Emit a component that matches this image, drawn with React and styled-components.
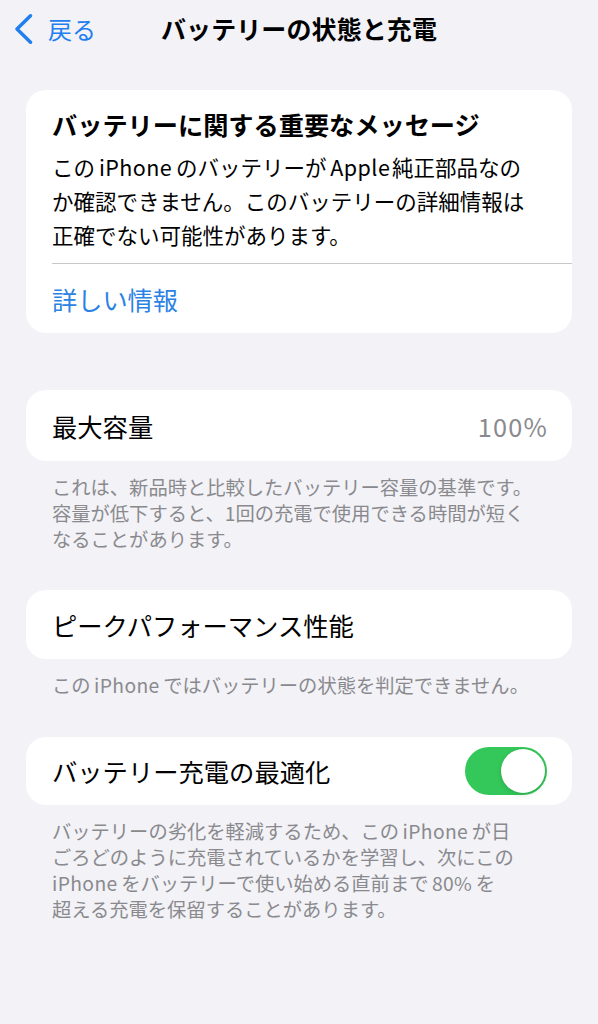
import React from "react";
import styled, { createGlobalStyle } from "styled-components";

const Global = createGlobalStyle`
  html, body {
    margin: 0;
    padding: 0;
    background: #f2f2f7;
  }
  body {
    font-family: "Noto Sans CJK JP", "Noto Sans", sans-serif;
    color: #000;
    -webkit-font-smoothing: antialiased;
  }
`;

const Page = styled.div`
  width: 598px;
  min-height: 1024px;
  background: #f2f2f7;
`;

const Nav = styled.header`
  display: grid;
  grid-template-columns: 1fr auto 1fr;
  align-items: center;
  height: 56px;
`;

const Back = styled.div`
  display: flex;
  align-items: center;
  gap: 14px;
  padding-left: 14px;
  color: #1f7ff0;
  font-size: 24px;
  line-height: 30px;
  padding-top: 1px;
`;

const Title = styled.h1`
  margin: 0;
  font-size: 25px;
  font-weight: 700;
  line-height: 30px;
  letter-spacing: 0.1px;
`;

const Content = styled.main`
  padding: 34px 26px 0;
  display: flex;
  flex-direction: column;
`;

const Card = styled.section`
  background: #fff;
  border-radius: 20px;
  margin-top: ${(p) => p.$gap || 0}px;
`;

const MessageBody = styled.div`
  padding: 17px 26px 11px;
`;

const Heading = styled.h2`
  margin: 0 0 9px;
  font-size: 25.2px;
  font-weight: 700;
  line-height: 34px;
`;

const BodyText = styled.p`
  margin: 0;
  font-size: 21.5px;
  line-height: 34px;
  white-space: nowrap;
`;

const Latin = styled.span`
  margin: 0 ${(p) => (p.$tight ? 0.08 : 0.18)}em 0 ${(p) => (p.$start ? 0 : 0.18)}em;
  letter-spacing: 0.02em;
`;

const Divider = styled.div`
  height: 1px;
  background: #c8c8cc;
  margin-left: 26px;
`;

const Link = styled.div`
  padding: 18px 26px 17px;
  font-size: 25.2px;
  line-height: 34px;
  color: #2a82e4;
`;

const Row = styled.div`
  display: flex;
  align-items: center;
  justify-content: space-between;
  height: ${(p) => p.$h || 70}px;
  padding: 0 26px;
`;

const Label = styled.span`
  font-size: 25.3px;
  line-height: 34px;
`;

const Value = styled.span`
  font-size: 25.3px;
  line-height: 34px;
  color: #8a8a8e;
  letter-spacing: 1.2px;
  margin-right: -2px;
`;

const Footer = styled.p`
  margin: 13px 0 0;
  padding: 0 26px;
  font-size: 19.3px;
  line-height: 26px;
  color: #8a8a8e;
  white-space: nowrap;
`;

const Track = styled.div`
  position: relative;
  width: 82px;
  height: 48px;
  border-radius: 24px;
  background: ${(p) => (p.$on ? "#34c759" : "#e9e9eb")};
  margin-right: -1px;
`;

const Knob = styled.div`
  position: absolute;
  top: 2px;
  left: ${(p) => (p.$on ? 36 : 2)}px;
  width: 44px;
  height: 44px;
  border-radius: 50%;
  background: #fff;
  box-shadow: 0 0 0 0.5px rgba(0, 0, 0, 0.06), 0 2px 5px rgba(0, 0, 0, 0.12);
`;

const Toggle = ({ on }) => (
  <Track $on={on}>
    <Knob $on={on} />
  </Track>
);

const Chevron = () => (
  <svg width="20" height="30" viewBox="0 0 20 30" fill="none">
    <path
      d="M16.5 1.8 L3 15 L16.5 28.2"
      stroke="#1f7ff0"
      strokeWidth="3.4"
      strokeLinecap="round"
      strokeLinejoin="round"
    />
  </svg>
);

export default function App() {
  return (
    <Page>
      <Global />
      <Nav>
        <Back>
          <Chevron />
          <span>戻る</span>
        </Back>
        <Title>バッテリーの状態と充電</Title>
        <div />
      </Nav>
      <Content>
        <Card>
          <MessageBody>
            <Heading>バッテリーに関する重要なメッセージ</Heading>
            <BodyText>
              この<Latin>iPhone</Latin>のバッテリーが<Latin $tight>Apple</Latin>純正部品なの
              <br />
              か確認できません。このバッテリーの詳細情報は
              <br />
              正確でない可能性があります。
            </BodyText>
          </MessageBody>
          <Divider />
          <Link>詳しい情報</Link>
        </Card>

        <Card $gap={57}>
          <Row $h={71}>
            <Label>最大容量</Label>
            <Value>100%</Value>
          </Row>
        </Card>
        <Footer>
          これは、新品時と比較したバッテリー容量の基準です。
          <br />
          容量が低下すると、1回の充電で使用できる時間が短く
          <br />
          なることがあります。
        </Footer>

        <Card $gap={38}>
          <Row $h={69}>
            <Label>ピークパフォーマンス性能</Label>
          </Row>
        </Card>
        <Footer>
          この<Latin>iPhone</Latin>ではバッテリーの状態を判定できません。
        </Footer>

        <Card $gap={39}>
          <Row $h={68}>
            <Label>バッテリー充電の最適化</Label>
            <Toggle on />
          </Row>
        </Card>
        <Footer>
          バッテリーの劣化を軽減するため、この<Latin>iPhone</Latin>が日
          <br />
          ごろどのように充電されているかを学習し、次にこの
          <br />
          <Latin $start>iPhone</Latin>をバッテリーで使い始める直前まで<Latin>80%</Latin>を
          <br />
          超える充電を保留することがあります。
        </Footer>
      </Content>
    </Page>
  );
}
